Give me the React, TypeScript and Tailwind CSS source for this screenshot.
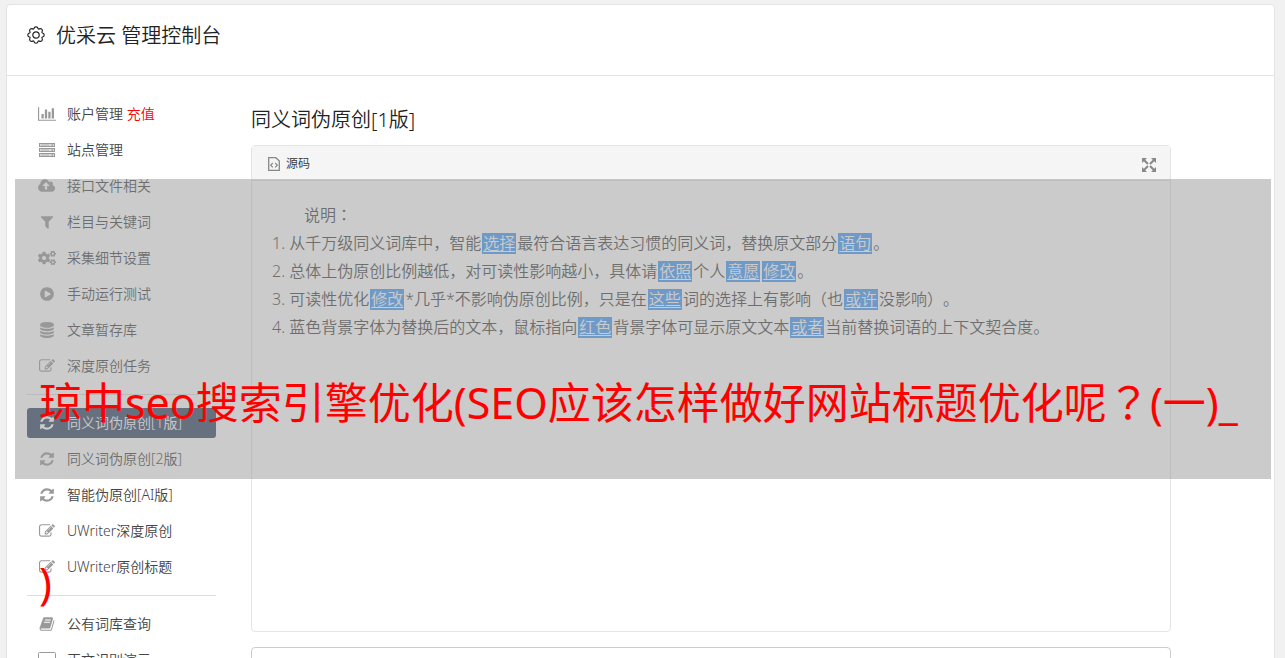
import type { ReactNode } from 'react';
import { FaCogs } from 'react-icons/fa';

type GlyphProps = { d: string; width?: number; className?: string };

function Glyph({ d, width = 1792, className = 'h-4' }: GlyphProps) {
  return (
    <svg viewBox={`0 0 ${width} 1792`} className={className} fill="currentColor" aria-hidden="true">
      <path d={d} />
    </svg>
  );
}

const paths = {
  chart:
    'M640 896v512h-256v-512h256zm384-512v1024h-256v-1024h256zm1024 1152v128h-2048v-1536h128v1408h1920zm-640-896v768h-256v-768h256zm384-384v1152h-256v-1152h256z',
  upload:
    'M1280 864q0-14-9-23l-352-352q-9-9-23-9t-23 9l-351 351q-10 12-10 24 0 14 9 23t23 9h224v352q0 13 9.500 22.500t22.500 9.500h192q13 0 22.500-9.500t9.500-22.500v-352h224q13 0 22.500-9.500t9.500-22.500zm640 288q0 159-112.500 271.500t-271.500 112.500h-1088q-185 0-316.500-131.500t-131.500-316.500q0-130 70-240t188-165q-2-30-2-43 0-212 150-362t362-150q156 0 285.500 87t188.500 231q71-62 166-62 106 0 181 75t75 181q0 76-41 138 130 31 213.500 135.500t83.500 238.500z',
  filter:
    'M1595 295q17 41-14 70l-493 493v742q0 42-39 59-13 5-25 5-27 0-45-19l-256-256q-19-19-19-45v-486l-493-493q-31-29-14-70 17-39 59-39h1280q42 0 59 39z',
  play:
    'M896 128q209 0 385.500 103t279.500 279.500 103 385.500-103 385.500-279.500 279.500-385.500 103-385.500-103-279.500-279.500-103-385.500 103-385.500 279.500-279.500 385.500-103zm384 823q32-18 32-55t-32-55l-544-320q-31-19-64-1-32 19-32 56v640q0 37 32 56 16 8 32 8 17 0 32-9z',
  database:
    'M896 768q237 0 443-43t325-127v170q0 69-103 128t-280 93.500-385 34.500-385-34.500-280-93.500-103-128v-170q119 84 325 127t443 43zm0 768q237 0 443-43t325-127v170q0 69-103 128t-280 93.500-385 34.500-385-34.500-280-93.500-103-128v-170q119 84 325 127t443 43zm0-384q237 0 443-43t325-127v170q0 69-103 128t-280 93.500-385 34.500-385-34.500-280-93.500-103-128v-170q119 84 325 127t443 43zm0-1152q208 0 385 34.500t280 93.500 103 128v128q0 69-103 128t-280 93.500-385 34.500-385-34.500-280-93.500-103-128v-128q0-69 103-128t280-93.500 385-34.500z',
  edit:
    'M888 1184l116-116-152-152-116 116v56h96v96h56zm440-720q-16-16-33 1l-350 350q-17 17-1 33t33-1l350-350q17-17 1-33zm80 594v190q0 119-84.500 203.500t-203.500 84.500h-832q-119 0-203.500-84.500t-84.500-203.500v-832q0-119 84.500-203.500t203.500-84.500h832q63 0 117 25 15 7 18 23 3 17-9 29l-49 49q-14 14-32 8-23-6-45-6h-832q-66 0-113 47t-47 113v832q0 66 47 113t113 47h832q66 0 113-47t47-113v-126q0-13 9-22l64-64q15-15 35-7t20 29zm-96-738l288 288-672 672h-288v-288zm444 132l-92 92-288-288 92-92q28-28 68-28t68 28l152 152q28 28 28 68t-28 68z',
  refresh:
    'M1639 1056q0 5-1 7-64 268-268 434.500t-478 166.500q-146 0-282.500-55t-243.500-157l-129 129q-19 19-45 19t-45-19-19-45v-448q0-26 19-45t45-19h448q26 0 45 19t19 45-19 45l-137 137q71 66 161 102t187 36q134 0 250-65t186-179q11-17 53-117 8-23 30-23h192q13 0 22.500 9.500t9.500 22.500zm25-800v448q0 26-19 45t-45 19h-448q-26 0-45-19t-19-45 19-45l138-138q-148-137-349-137-134 0-250 65t-186 179q-11 17-53 117-8 23-30 23h-199q-13 0-22.500-9.500t-9.500-22.500v-7q65-268 270-434.500t480-166.500q146 0 284 55.500t245 156.500l130-129q19-19 45-19t45 19 19 45z',
  book:
    'M1703 478q40 57 18 129l-275 906q-19 64-76.500 107.500t-122.500 43.500h-923q-77 0-148.500-53.500t-99.500-131.500q-24-67-2-127 0-4 3-27t4-37q1-8-3-21.500t-3-19.500q2-11 8-21t16.500-23.500 16.500-23.500q23-38 45-91.500t30-91.500q3-10 .5-30t-.5-28q3-11 17-28t17-23q21-36 42-92t25-90q1-9-2.500-32t.5-28q4-13 22-30.500t22-22.500q19-26 42.500-84.500t27.500-96.500q1-8-3-25.500t-2-26.500q2-8 9-18t18-23 17-21q8-12 16.500-30.500t15-35 16-36 19.500-32 26.500-23.500 36-11.500 47.500 5.500l-1 3q38-9 51-9h761q74 0 114 56t18 130l-274 906q-36 119-71.500 153.500t-128.500 34.500h-869q-27 0-38 15-11 16-1 43 24 70 144 70h923q29 0 56-15.500t35-41.500l300-987q7-22 5-57 38 15 59 43zm-1064 2q-4 13 2 22.500t20 9.500h608q13 0 25.500-9.500t16.500-22.500l21-64q4-13-2-22.500t-20-9.500h-608q-13 0-25.500 9.500t-16.500 22.500zm-83 256q-4 13 2 22.500t20 9.500h608q13 0 25.500-9.500t16.500-22.500l21-64q4-13-2-22.500t-20-9.500h-608q-13 0-25.500 9.500t-16.500 22.500z',
};

function ServerIcon() {
  return (
    <svg viewBox="0 0 16 14" className="h-3.5 w-4" fill="none" stroke="currentColor" aria-hidden="true">
      {[0, 5, 10].map((y) => (
        <g key={y}>
          <rect x="0.5" y={y + 0.5} width="15" height="3" fill="#ddd" />
          <path d={`M2 ${y + 2}h8`} strokeWidth="0.6" />
          <path d={`M12.500 ${y + 2}h1.500`} strokeWidth="1.5" />
        </g>
      ))}
    </svg>
  );
}

function MonitorIcon() {
  return (
    <svg viewBox="0 0 18 16" className="h-4 w-[18px]" fill="none" stroke="currentColor" aria-hidden="true">
      <rect x="0.5" y="0.5" width="17" height="12" rx="1" />
      <path d="M6 15h6M9 12.500V15" />
    </svg>
  );
}

function GearIcon() {
  return (
    <svg viewBox="0 0 18 18" className="h-[18px] w-[18px]" fill="none" stroke="currentColor" strokeWidth="1.2" aria-hidden="true">
      <circle cx="9" cy="9" r="3.200" />
      <path
        strokeLinejoin="round"
        d="M7 2.500Q7.200 .8 9 .8T11 2.500Q11.300 3.300 12.200 2.900Q13.700 2.100 14.800 3.200T15.100 5.800Q14.700 6.700 15.500 7Q17.200 7.200 17.200 9T15.500 11Q14.700 11.300 15.100 12.200Q15.900 13.700 14.800 14.800T12.200 15.100Q11.300 14.700 11 15.500Q10.800 17.200 9 17.200T7 15.500Q6.700 14.700 5.800 15.100Q4.300 15.900 3.200 14.800T2.900 12.200Q3.300 11.300 2.500 11Q.8 10.800 .8 9T2.500 7Q3.300 6.700 2.900 5.800Q2.100 4.300 3.200 3.200T5.800 2.900Q6.700 3.300 7 2.500Z"
      />
    </svg>
  );
}

function SourceIcon() {
  return (
    <svg viewBox="0 0 12 14" className="h-3.5 w-3" fill="none" stroke="#888" aria-hidden="true">
      <path d="M.7.7h7.100l3.500 3.300v9.300H.7z" strokeWidth="1.300" />
      <path d="M4.800 6L2.700 8.200l2.100 2.200M7.200 6l2.100 2.200-2.100 2.200" strokeWidth="1.200" />
    </svg>
  );
}

function ExpandIcon() {
  return (
    <svg viewBox="0 0 14 14" className="h-3.5 w-3.5" fill="#888" stroke="#888" aria-hidden="true">
      <path stroke="none" d="M0 0h5L0 5zM14 0v5L9 0zM0 14V9l5 5zM14 14H9l5-5z" />
      <path strokeWidth="2" d="M2 2l4 4M12 2L8 6M2 12l4-4M12 12L8 8" />
    </svg>
  );
}

type Item = { label: string; icon: ReactNode; extra?: string; active?: boolean };

const editIcon = <Glyph d={paths.edit} />;
const refreshIcon = <Glyph d={paths.refresh} />;

const groups: Item[][] = [
  [
    { label: '账户管理', icon: <Glyph d={paths.chart} width={2048} />, extra: '充值' },
    { label: '站点管理', icon: <ServerIcon /> },
    { label: '接口文件相关', icon: <Glyph d={paths.upload} width={1920} /> },
    { label: '栏目与关键词', icon: <Glyph d={paths.filter} /> },
    { label: '采集细节设置', icon: <FaCogs className="h-4 w-[18px]" /> },
    { label: '手动运行测试', icon: <Glyph d={paths.play} /> },
    { label: '文章暂存库', icon: <Glyph d={paths.database} /> },
    { label: '深度原创任务', icon: editIcon },
  ],
  [
    { label: '同义词伪原创[1版]', icon: refreshIcon, active: true },
    { label: '同义词伪原创[2版]', icon: refreshIcon },
    { label: '智能伪原创[AI版]', icon: refreshIcon },
    { label: 'UWriter深度原创', icon: editIcon },
    { label: 'UWriter原创标题', icon: editIcon },
  ],
  [
    { label: '公有词库查询', icon: <Glyph d={paths.book} /> },
    { label: '正文识别演示', icon: <MonitorIcon /> },
  ],
];

function NavItem({ label, icon, extra, active }: Item) {
  return (
    <a
      href="#"
      className={`flex h-[30px] items-center rounded-[3px] text-sm ${active ? 'bg-[#374967] text-white' : 'text-[#444]'}`}
    >
      <span className={`flex w-10 justify-center ${active ? 'text-white' : 'text-[#999]'}`}>{icon}</span>
      <span>
        {label}
        {extra && <span className="text-[#f00]"> {extra}</span>}
      </span>
    </a>
  );
}

function Sidebar() {
  return (
    <nav className="flex w-[189px] shrink-0 flex-col gap-1.5">
      {groups.map((items, i) => (
        <div key={i} className="flex flex-col gap-1.5">
          {i > 0 && <hr className="my-[7px] border-[#ddd]" />}
          {items.map((item) => (
            <NavItem key={item.label} {...item} />
          ))}
        </div>
      ))}
    </nav>
  );
}

function Mark({ children }: { children: ReactNode }) {
  return (
    <span className="mx-px inline-block bg-[#479bf7] px-px leading-[21px] text-white underline underline-offset-2">
      {children}
    </span>
  );
}

// centred full-width punctuation
function Punct({ children }: { children: ReactNode }) {
  return <span className="font-['Noto_Sans_CJK_TC',sans-serif]">{children}</span>;
}

function Editor() {
  return (
    <section className="h-[487px] rounded border border-[#e4e4e4]">
      <div className="flex h-[35px] items-center justify-between border-b border-[#e4e4e4] bg-[#f5f5f5] px-4 pt-0.5">
        <button type="button" className="flex items-center gap-1.5 text-xs text-[#333]">
          <SourceIcon />
          源码
        </button>
        <button type="button" aria-label="全屏" className="-mr-0.5 pt-0.5">
          <ExpandIcon />
        </button>
      </div>
      <div className="px-5 pt-[19px] text-base leading-7 text-[#444]">
        <p className="pl-8">
          说明<Punct>：</Punct>
        </p>
        <ol className="whitespace-nowrap">
          <li>
            1. 从千万级同义词库中，智能<Mark>选择</Mark>最符合语言表达习惯的同义词，替换原文部分<Mark>语句</Mark>。
          </li>
          <li>
            2. 总体上伪原创比例越低，对可读性影响越小，具体请<Mark>依照</Mark>个人<Mark>意愿</Mark>
            <Mark>修改</Mark>。
          </li>
          <li>
            3. 可读性优化<Mark>修改</Mark>*几乎*不影响伪原创比例，只是在<Mark>这些</Mark>词的选择上有影响（也<Mark>或许</Mark>没影响）。
          </li>
          <li>
            4. 蓝色背景字体为替换后的文本，鼠标指向<Mark>红色</Mark>背景字体可显示原文文本<Mark>或者</Mark>当前替换词语的上下文契合度。
          </li>
        </ol>
      </div>
    </section>
  );
}

export default function App() {
  return (
    <div className="relative h-screen overflow-hidden bg-[#f1f1f1] pt-1 pr-2.5 pl-1.5 font-['Noto_Sans','Noto_Sans_CJK_SC',sans-serif] font-[350] [text-spacing-trim:space-all]">
      <div className="min-h-full rounded-t border border-[#e4e4e4] bg-white">
        <header className="flex h-[71px] items-start gap-[11px] border-b border-[#e4e4e4] px-5 pt-4 text-[#222]">
          <span className="pt-[5px]">
            <GearIcon />
          </span>
          <h1 className="text-xl leading-[30px]">优采云 管理控制台</h1>
        </header>
        <div className="flex gap-[35px] pt-[23px] pr-[103px] pl-5">
          <Sidebar />
          <main className="min-w-0 flex-1 pt-1.5">
            <h2 className="mb-[11px] text-xl leading-[29px] text-[#222]">同义词伪原创[1版]</h2>
            <Editor />
            <textarea aria-label="原文" className="mt-[15px] block h-40 w-full resize-none rounded border border-[#ccc] p-4" />
          </main>
        </div>
      </div>

      <div className="absolute top-[179px] right-3.5 left-[15px] h-[300px] bg-[#979797]/50">
        <p className="px-6 pt-[131px] text-[43px] leading-[180px] font-normal whitespace-nowrap text-[#f00]">
          琼中seo搜索引擎优化(SEO应该怎样做好网站标题优化呢<Punct>？</Punct>(一)_
          <br />)
        </p>
      </div>
    </div>
  );
}
